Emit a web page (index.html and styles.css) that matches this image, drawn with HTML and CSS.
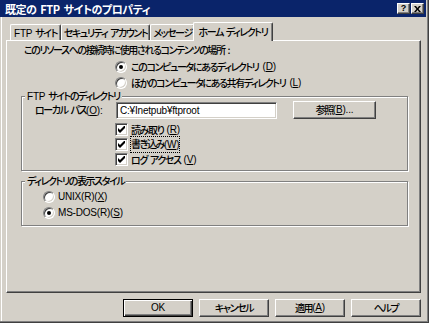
FILE: index.html
```html
<!DOCTYPE html>
<html lang="ja">
<head>
    <meta charset="UTF-8">
    <title>既定の FTP サイトのプロパティ</title>
    <link rel="stylesheet" href="styles.css">
</head>
<body>
    <div class="window">
        <div class="titlebar">
            <span class="title">既定の FTP サイトのプロパティ</span>
            <div class="caption">
                <span class="cbtn help">?</span>
                <span class="cbtn">
                    <svg width="7" height="6" viewBox="0 0 7 6"><path d="M0 0h2l1.5 2L5 0h2L4.5 3 7 6H5L3.5 4 2 6H0l2.5-3z" fill="#000"/></svg>
                </span>
            </div>
        </div>
        <div class="content">
            <div class="tabs">
                <div class="tab t1"><span class="latin">FTP</span> サイト</div>
                <div class="tab t2">セキュリティ アカウント</div>
                <div class="tab t3">メッセージ</div>
                <div class="tab t4 active">ホーム ディレクトリ</div>
            </div>
            <div class="panel">
                <div class="prompt">このリソースへの接続時に使用されるコンテンツの場所 :</div>
                <div class="options">
                    <div class="opt"><span class="radio on"></span>このコンピュータにあるディレクトリ<span class="key">(<u>D</u>)</span></div>
                    <div class="opt"><span class="radio"></span>ほかのコンピュータにある共有ディレクトリ<span class="key">(<u>L</u>)</span></div>
                </div>

                <div class="group dir">
                    <div class="legend"><span class="latin">FTP</span> サイトのディレクトリ</div>
                    <div class="path-row">
                        <span class="path-label">ローカル パス<span class="key">(<u>O</u>):</span></span>
                        <div class="textbox">C:¥Inetpub¥ftproot</div>
                        <div class="btn browse">参照<span class="key">(<u>B</u>)...</span></div>
                    </div>
                    <div class="checks">
                        <div class="chk"><span class="box"><svg width="7" height="7" viewBox="0 0 7 7"><path d="M0 2v3l2 2 5-5V-1L2 4z" fill="#000"/></svg></span>読み取り<span class="key">(<u>R</u>)</span></div>
                        <div class="chk"><span class="box"><svg width="7" height="7" viewBox="0 0 7 7"><path d="M0 2v3l2 2 5-5V-1L2 4z" fill="#000"/></svg></span><span class="focus">書き込み<span class="key">(<u>W</u>)</span></span></div>
                        <div class="chk"><span class="box"><svg width="7" height="7" viewBox="0 0 7 7"><path d="M0 2v3l2 2 5-5V-1L2 4z" fill="#000"/></svg></span>ログ アクセス<span class="key">(<u>V</u>)</span></div>
                    </div>
                </div>

                <div class="group view">
                    <div class="legend">ディレクトリの表示スタイル</div>
                    <div class="view-opts">
                        <div class="opt"><span class="radio"></span><span class="latin">UNIX(R)(<u>X</u>)</span></div>
                        <div class="opt"><span class="radio on"></span><span class="latin">MS-DOS(R)(<u>S</u>)</span></div>
                    </div>
                </div>
            </div>
            <div class="buttons">
                <div class="btn default"><span class="latin">OK</span></div>
                <div class="btn">キャンセル</div>
                <div class="btn">適用<span class="key">(<u>A</u>)</span></div>
                <div class="btn">ヘルプ</div>
            </div>
        </div>
    </div>
</body>
</html>
```

FILE: styles.css
```css
* {
    margin: 0;
    padding: 0;
    box-sizing: border-box;
}
body {
    background: #d4d0c8;
    color: #000;
    font-family: "Noto Sans CJK JP", "Liberation Sans", sans-serif;
    font-size: 10px;
    font-weight: 500;
    letter-spacing: -1.4px;
    word-spacing: 2px;
    font-feature-settings: "palt";
    line-height: 14px;
}
u {
    text-decoration: underline;
    text-underline-offset: 1px;
}
.latin,
.key {
    font-family: "Liberation Sans", sans-serif;
    font-size: 10px;
    font-weight: normal;
    letter-spacing: -0.2px;
    word-spacing: 0;
}

/* window frame */
.window {
    width: 429px;
    height: 323px;
    box-shadow: inset -1px -1px 0 #404040, inset -2px -2px 0 #808080, inset 1px 0 0 #d4d0c8, inset 2px 0 0 #fff;
}
.titlebar {
    height: 17px;
    margin-right: 3px;
    padding-left: 5px;
    background: #0a246a;
    color: #fff;
    display: flex;
    justify-content: space-between;
    align-items: center;
}
.title {
    font-size: 11px;
    font-weight: bold;
    letter-spacing: -0.5px;
    word-spacing: 2px;
}
.caption {
    display: flex;
    align-self: flex-start;
    margin-top: 3px;
    padding-right: 2px;
}
.cbtn {
    width: 13px;
    height: 11px;
    background: #d4d0c8;
    border: 1px solid;
    border-color: #fff #404040 #404040 #fff;
    box-shadow: inset -1px -1px 0 #808080;
    display: flex;
    align-items: center;
    justify-content: center;
    color: #000;
    font-family: "Liberation Sans", sans-serif;
    font-size: 9px;
    font-weight: bold;
    letter-spacing: 0;
    line-height: 9px;
}
.cbtn.help {
    margin-right: 1px;
}

.content {
    padding: 0 8px 0 6px;
}

/* tabs */
.tabs {
    display: flex;
    align-items: flex-end;
    padding-top: 5px;
    padding-left: 4px;
}
.tab {
    height: 16px;
    padding-top: 1px;
    border: 1px solid;
    border-color: #fff #404040 transparent #fff;
    border-bottom: none;
    border-radius: 2px 2px 0 0;
    box-shadow: inset -1px 0 0 #808080;
    text-align: center;
    white-space: nowrap;
}
.t1 { width: 51px; }
.t2 { width: 89px; }
.t3 { width: 45px; }
.tab.active {
    width: 80px;
    height: 19px;
    margin-left: -2px;
    margin-bottom: -1px;
    padding-top: 2px;
    background: #d4d0c8;
    position: relative;
    z-index: 1;
}

/* tab page */
.panel {
    height: 253px;
    border: 1px solid;
    border-color: #fff #404040 #404040 #fff;
    box-shadow: inset -1px -1px 0 #808080;
    padding: 2px 12px 0 14px;
}
.prompt {
    padding-left: 3px;
}
.options {
    margin: 2px 0 0 94px;
}
.opt {
    height: 16px;
    display: flex;
    align-items: center;
    gap: 4px;
    white-space: nowrap;
}
.radio {
    flex: none;
    width: 12px;
    height: 12px;
    border-radius: 50%;
    border: 1px solid;
    border-color: #808080 #fff #fff #808080;
    box-shadow: inset 1px 1px 0 #404040, inset -1px -1px 0 #d4d0c8;
    background: #fff;
    display: flex;
    align-items: center;
    justify-content: center;
}
.radio.on::after {
    content: "";
    width: 4px;
    height: 4px;
    border-radius: 50%;
    background: #000;
}

/* group boxes */
.group {
    border: 1px solid #808080;
    box-shadow: inset 1px 1px 0 #fff, 1px 1px 0 #fff;
}
.legend {
    width: fit-content;
    margin: -8px 0 -6px 3px;
    padding: 0 2px;
    background: #d4d0c8;
    white-space: nowrap;
}
.dir {
    height: 75px;
    margin-top: 5px;
}
.path-row {
    display: flex;
    align-items: center;
    margin: 3px 0 0 13px;
}
.path-label {
    width: 81px;
    white-space: nowrap;
}
.textbox {
    width: 161px;
    height: 17px;
    background: #fff;
    border: 1px solid;
    border-color: #808080 #fff #fff #808080;
    box-shadow: inset 1px 1px 0 #404040, inset -1px -1px 0 #d4d0c8;
    padding: 1px 0 0 3px;
    font-family: "Liberation Sans", sans-serif;
    font-weight: normal;
    letter-spacing: -0.2px;
}
.btn {
    height: 18px;
    border: 1px solid;
    border-color: #fff #404040 #404040 #fff;
    box-shadow: inset -1px -1px 0 #808080;
    display: flex;
    align-items: center;
    justify-content: center;
    white-space: nowrap;
}
.browse {
    width: 83px;
    margin-left: 16px;
}
.checks {
    margin: 3px 0 0 93px;
}
.chk {
    height: 15px;
    display: flex;
    align-items: center;
    gap: 3px;
}
.box {
    flex: none;
    width: 13px;
    height: 13px;
    background: #fff;
    border: 1px solid;
    border-color: #808080 #fff #fff #808080;
    box-shadow: inset 1px 1px 0 #404040, inset -1px -1px 0 #d4d0c8;
    display: flex;
    align-items: center;
    justify-content: center;
}
.focus {
    outline: 1px dotted #000;
}
.view {
    height: 45px;
    margin-top: 10px;
}
.view-opts {
    margin: 7px 0 0 21px;
}
.view .opt {
    gap: 3px;
}

/* dialog buttons */
.buttons {
    display: flex;
    justify-content: flex-end;
    gap: 6px;
    margin-top: 6px;
}
.buttons .btn {
    width: 70px;
}
.btn.default {
    border-color: #000;
    box-shadow: inset 1px 1px 0 #fff, inset -1px -1px 0 #404040, inset -2px -2px 0 #808080;
}
```
